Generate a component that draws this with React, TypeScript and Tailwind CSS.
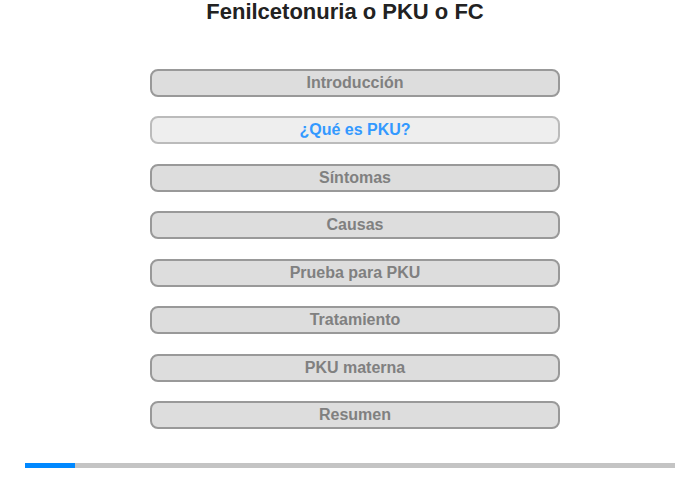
const items = [
  'Introducción',
  '¿Qué es PKU?',
  'Síntomas',
  'Causas',
  'Prueba para PKU',
  'Tratamiento',
  'PKU materna',
  'Resumen',
];

const ACTIVE = 1;

export default function App() {
  return (
    <div className="relative h-[480px] w-[700px] bg-white font-['Liberation_Sans',Arial,sans-serif]">
      <h1 className="pr-[10px] text-center text-[22px] leading-[24px] font-bold text-[#222]">
        Fenilcetonuria o PKU o FC
      </h1>

      <nav className="mt-[45px] ml-[150px] flex w-[410px] flex-col gap-[19.43px]">
        {items.map((label, i) =>
          i === ACTIVE ? (
            <div
              key={label}
              className="flex h-[28px] items-center justify-center rounded-[8px] border-2 border-[#bbbbbb] bg-[#eeeeee] text-[16px] font-bold text-[#3399ff]"
            >
              {label}
            </div>
          ) : (
            <div
              key={label}
              className="flex h-[28px] items-center justify-center rounded-[8px] border-2 border-[#999999] bg-[#dddddd] text-[16px] font-bold text-[#808080]"
            >
              {label}
            </div>
          ),
        )}
      </nav>

      <div className="mt-[34px] ml-[25px] flex h-[5px] w-[650px] bg-[#c4c4c4]">
        <div className="h-full w-[50px] bg-[#0088ff]" />
      </div>
    </div>
  );
}
